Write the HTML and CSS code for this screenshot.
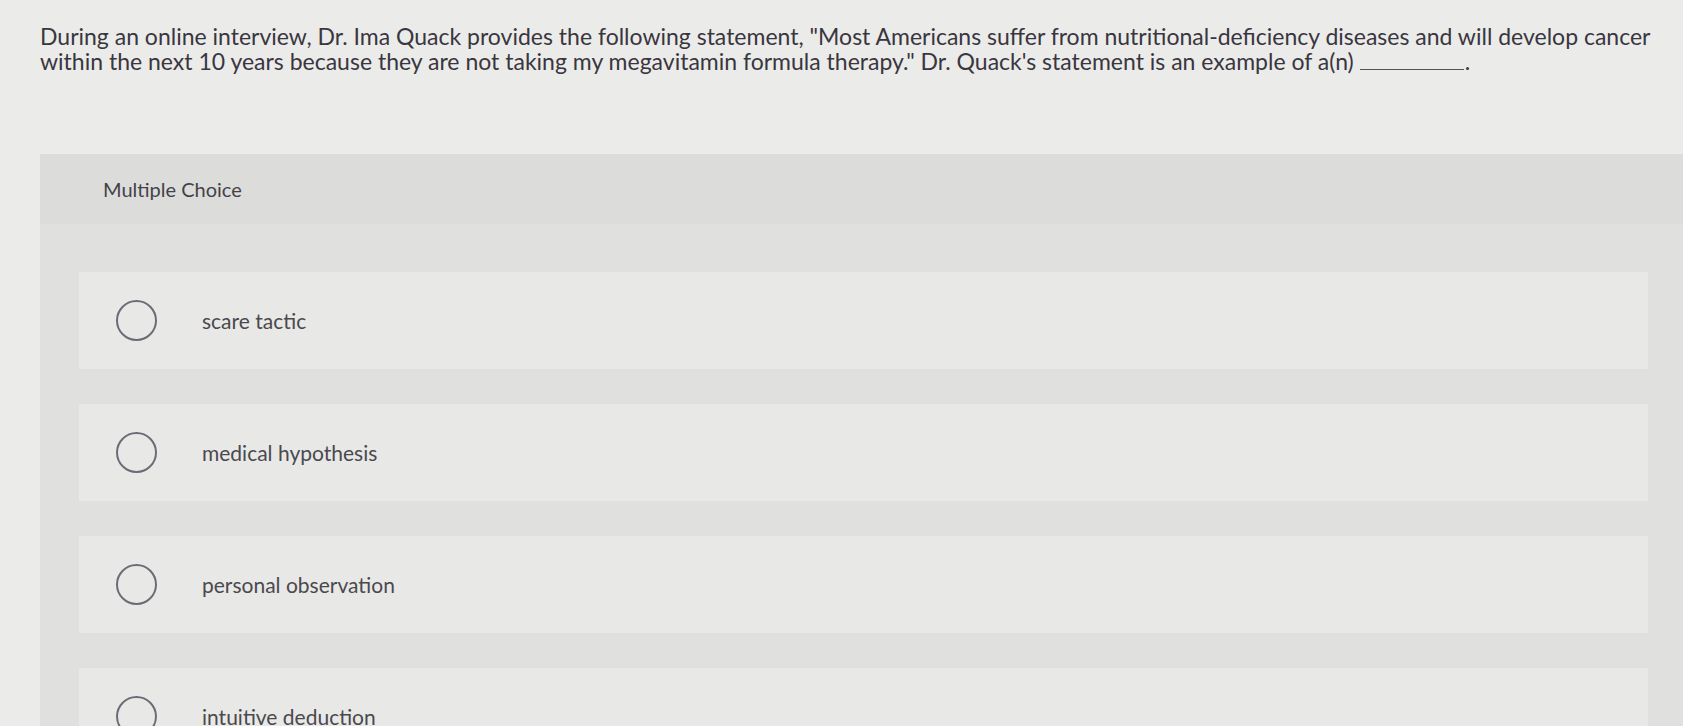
FILE: index.html
```html
<!DOCTYPE html>
<html lang="en">
<head>
<meta charset="utf-8">
<title>Multiple Choice</title>
<link rel="stylesheet" href="styles.css">
</head>
<body>
<div class="page">
  <p class="question">During an online interview, Dr. Ima Quack provides the following statement, "Most Americans suffer from nutritional-deficiency diseases and will develop cancer within the next 10 years because they are not taking my megavitamin formula therapy." Dr. Quack's statement is an example of a(n) <span class="blank"></span>.</p>
  <section class="panel">
    <div class="panel-header">Multiple Choice</div>
    <div class="panel-body">
      <div class="choice"><span class="radio"></span><span class="label">scare tactic</span></div>
      <div class="choice"><span class="radio"></span><span class="label">medical hypothesis</span></div>
      <div class="choice"><span class="radio"></span><span class="label">personal observation</span></div>
      <div class="choice"><span class="radio"></span><span class="label">intuitive deduction</span></div>
    </div>
  </section>
</div>
</body>
</html>
```

FILE: styles.css
```css
html, body {
  margin: 0;
  padding: 0;
  height: 100%;
  overflow: hidden;
}
body {
  background: #ebebe9;
  font-family: Lato, "Open Sans", "Liberation Sans", sans-serif;
}
.page {
  display: flex;
  flex-direction: column;
}
.question {
  margin: 0;
  padding: 24px 20px 0 40px;
  max-width: 1625px;
  font-size: 23px;
  line-height: 25px;
  color: #3a3640;
}
.blank {
  display: inline-block;
  width: 104px;
  margin-right: 1px;
  border-bottom: 1px solid #55525a;
  vertical-align: baseline;
}
.panel {
  margin: 80px 0 0 40px;
  background: #e0e0de;
}
.panel-header {
  height: 70px;
  padding-left: 63px;
  display: flex;
  align-items: center;
  font-size: 20px;
  color: #444248;
  background: #dcdcda;
}
.panel-body {
  padding: 48px 35px 40px 39px;
  display: flex;
  flex-direction: column;
  gap: 35px;
}
.choice {
  height: 97px;
  display: flex;
  align-items: center;
  padding-left: 37px;
  background: #e8e8e6;
}
.radio {
  width: 37px;
  height: 37px;
  border: 2px solid #6d6b76;
  border-radius: 50%;
  flex: none;
}
.label {
  margin-left: 45px;
  font-size: 21px;
  color: #4a494e;
}
```
